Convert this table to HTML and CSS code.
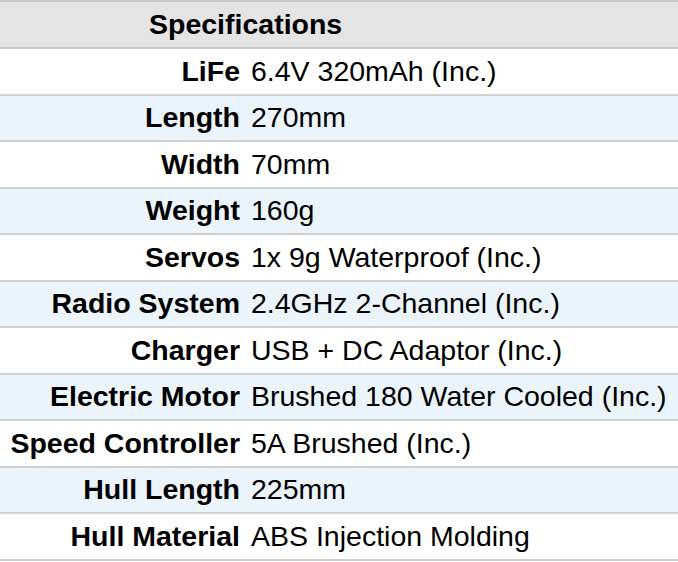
FILE: index.html
```html
<!DOCTYPE html>
<html>
<head>
<meta charset="utf-8">
<link rel="stylesheet" href="styles.css">
</head>
<body>
<div class="spec">
  <div class="head">Specifications</div>
  <div class="row"><div class="label">LiFe</div><div class="value">6.4V 320mAh (Inc.)</div></div>
  <div class="row alt"><div class="label">Length</div><div class="value">270mm</div></div>
  <div class="row"><div class="label">Width</div><div class="value">70mm</div></div>
  <div class="row alt"><div class="label">Weight</div><div class="value">160g</div></div>
  <div class="row"><div class="label">Servos</div><div class="value">1x 9g Waterproof (Inc.)</div></div>
  <div class="row alt"><div class="label">Radio System</div><div class="value">2.4GHz 2-Channel (Inc.)</div></div>
  <div class="row"><div class="label">Charger</div><div class="value">USB + DC Adaptor (Inc.)</div></div>
  <div class="row alt"><div class="label">Electric Motor</div><div class="value">Brushed 180 Water Cooled (Inc.)</div></div>
  <div class="row"><div class="label">Speed Controller</div><div class="value">5A Brushed (Inc.)</div></div>
  <div class="row alt"><div class="label">Hull Length</div><div class="value">225mm</div></div>
  <div class="row"><div class="label">Hull Material</div><div class="value">ABS Injection Molding</div></div>
</div>
</body>
</html>
```
FILE: styles.css
```css
html, body {
  margin: 0;
  padding: 0;
  background: #ffffff;
}
body {
  font-family: "Liberation Sans", Arial, sans-serif;
  font-size: 28.5px;
  color: #000;
}
.spec {
  width: 678px;
  border-top: 2px solid #c9c9c9;
}
.head {
  height: 45px;
  background: #e4e4e4;
  border-bottom: 2px solid #c9c9c9;
  display: flex;
  align-items: center;
  padding-left: 149px;
  font-weight: bold;
  box-sizing: border-box;
  height: 47px;
}
.row {
  display: grid;
  grid-template-columns: 245px 1fr;
  align-items: center;
  height: 46.5px;
  box-sizing: border-box;
  border-bottom: 2px solid #d0d0d0;
  white-space: nowrap;
}
.alt {
  background: #eaf4fa;
}
.label {
  font-weight: bold;
  text-align: right;
  padding-right: 5px;
}
.value {
  padding-left: 6px;
}
```
